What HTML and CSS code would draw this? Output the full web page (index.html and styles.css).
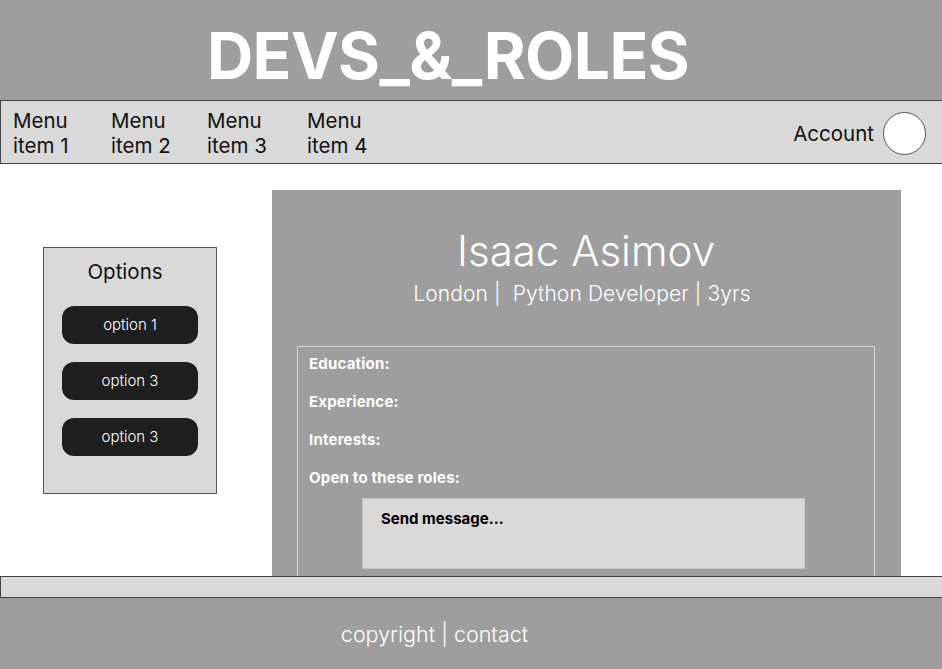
FILE: index.html
```html
<!DOCTYPE html>
<html lang="en">
<head>
<meta charset="utf-8">
<title>DEVS_&amp;_ROLES</title>
<link rel="stylesheet" href="styles.css">
</head>
<body>
<header class="top">
  <h1 class="logo">DEVS_&amp;_ROLES</h1>
</header>
<nav class="navbar">
  <ul class="menu">
    <li class="menu-item w1">Menu<br>item 1</li>
    <li class="menu-item w2">Menu<br>item 2</li>
    <li class="menu-item w3">Menu<br>item 3</li>
    <li class="menu-item">Menu<br>item 4</li>
  </ul>
  <div class="account">
    <span class="account-label">Account</span>
    <span class="avatar"></span>
  </div>
</nav>
<main class="main">
  <aside class="options">
    <h2 class="options-title">Options</h2>
    <button class="opt-btn">option 1</button>
    <button class="opt-btn">option 3</button>
    <button class="opt-btn">option 3</button>
  </aside>
  <section class="card">
    <h2 class="name">Isaac Asimov</h2>
    <p class="sub">London |&nbsp; Python Developer | 3yrs</p>
    <div class="details">
      <p class="label">Education:</p>
      <p class="label">Experience:</p>
      <p class="label">Interests:</p>
      <p class="label">Open to these roles:</p>
      <div class="message">Send message...</div>
    </div>
  </section>
</main>
<div class="strip"></div>
<footer class="footer">copyright | contact</footer>
</body>
</html>
```

FILE: styles.css
```css
* { box-sizing: border-box; }
html, body { margin: 0; padding: 0; }
body {
  font-family: Inter, "Noto Sans", "Liberation Sans", sans-serif;
  width: 942px;
  height: 669px;
  overflow: hidden;
  background: #ffffff;
}
.top {
  height: 100px;
  background: #9e9e9e;
  display: flex;
  align-items: center;
  justify-content: center;
  padding-right: 46px;
}
.logo {
  margin: 0;
  color: #ffffff;
  font-size: 64px;
  font-weight: 700;
  letter-spacing: -0.6px;
  line-height: 1;
  padding-top: 12px;
}
.navbar {
  height: 64px;
  background: #d9d9d9;
  border: 1px solid #444444;
  border-right: none;
  display: flex;
  align-items: center;
  justify-content: space-between;
  padding-left: 12px;
  padding-right: 16px;
  padding-top: 2px;
}
.menu {
  list-style: none;
  margin: 0;
  padding: 0;
  display: flex;
}
.menu-item {
  font-size: 20.5px;
  line-height: 25px;
  color: #111111;
}
.w1 { width: 98px; }
.w2 { width: 96px; }
.w3 { width: 100px; }
.account {
  display: flex;
  align-items: center;
  gap: 9px;
}
.account-label {
  font-size: 20.5px;
  color: #111111;
}
.avatar {
  width: 43px;
  height: 43px;
  border-radius: 50%;
  background: #ffffff;
  border: 1px solid #555555;
}
.main {
  height: 412px;
  overflow: hidden;
  display: flex;
  align-items: flex-start;
}
.options {
  margin-top: 83px;
  margin-left: 43px;
  width: 174px;
  height: 247px;
  background: #d9d9d9;
  border: 1px solid #555555;
  display: flex;
  flex-direction: column;
  align-items: center;
}
.options-title {
  margin: 12px 10px 22px 0;
  font-size: 20.5px;
  font-weight: 400;
  line-height: 24px;
  color: #111111;
}
.opt-btn {
  width: 136px;
  height: 38px;
  border: none;
  border-radius: 12px;
  background: #1e1e1e;
  color: #ffffff;
  font-family: inherit;
  font-size: 15px;
  font-weight: 300;
  margin-bottom: 18px;
  padding: 0 0 2px;
}
.card {
  margin-top: 26px;
  margin-left: 55px;
  width: 629px;
  height: 420px;
  background: #9e9e9e;
  padding: 36px 26px 0 25px;
  color: #ffffff;
}
.name {
  margin: 0;
  text-align: center;
  font-size: 42px;
  font-weight: 300;
  line-height: 50px;
}
.sub {
  margin: 5px 0 0;
  padding-right: 8px;
  text-align: center;
  font-size: 21px;
  font-weight: 300;
  line-height: 26px;
  letter-spacing: 0.1px;
}
.details {
  margin-top: 39px;
  border: 1px solid #d4d4d4;
  height: 260px;
  padding: 8px 12px 0 11px;
}
.label {
  margin: 0 0 20px;
  font-size: 15px;
  font-weight: 700;
  line-height: 18px;
  letter-spacing: 0.2px;
}
.message {
  margin-left: 53px;
  margin-top: -9px;
  width: 443px;
  height: 71px;
  background: #d9d9d9;
  border: 1px solid #c8c8c8;
  color: #000000;
  font-size: 15px;
  font-weight: 700;
  padding: 10px 18px;
}
.strip {
  height: 22px;
  background: #d9d9d9;
  border: 1px solid #444444;
  border-right: none;
}
.footer {
  height: 71px;
  background: #9e9e9e;
  color: #ffffff;
  font-size: 21.5px;
  font-weight: 300;
  display: flex;
  align-items: center;
  justify-content: center;
  padding-right: 73px;
}
```
